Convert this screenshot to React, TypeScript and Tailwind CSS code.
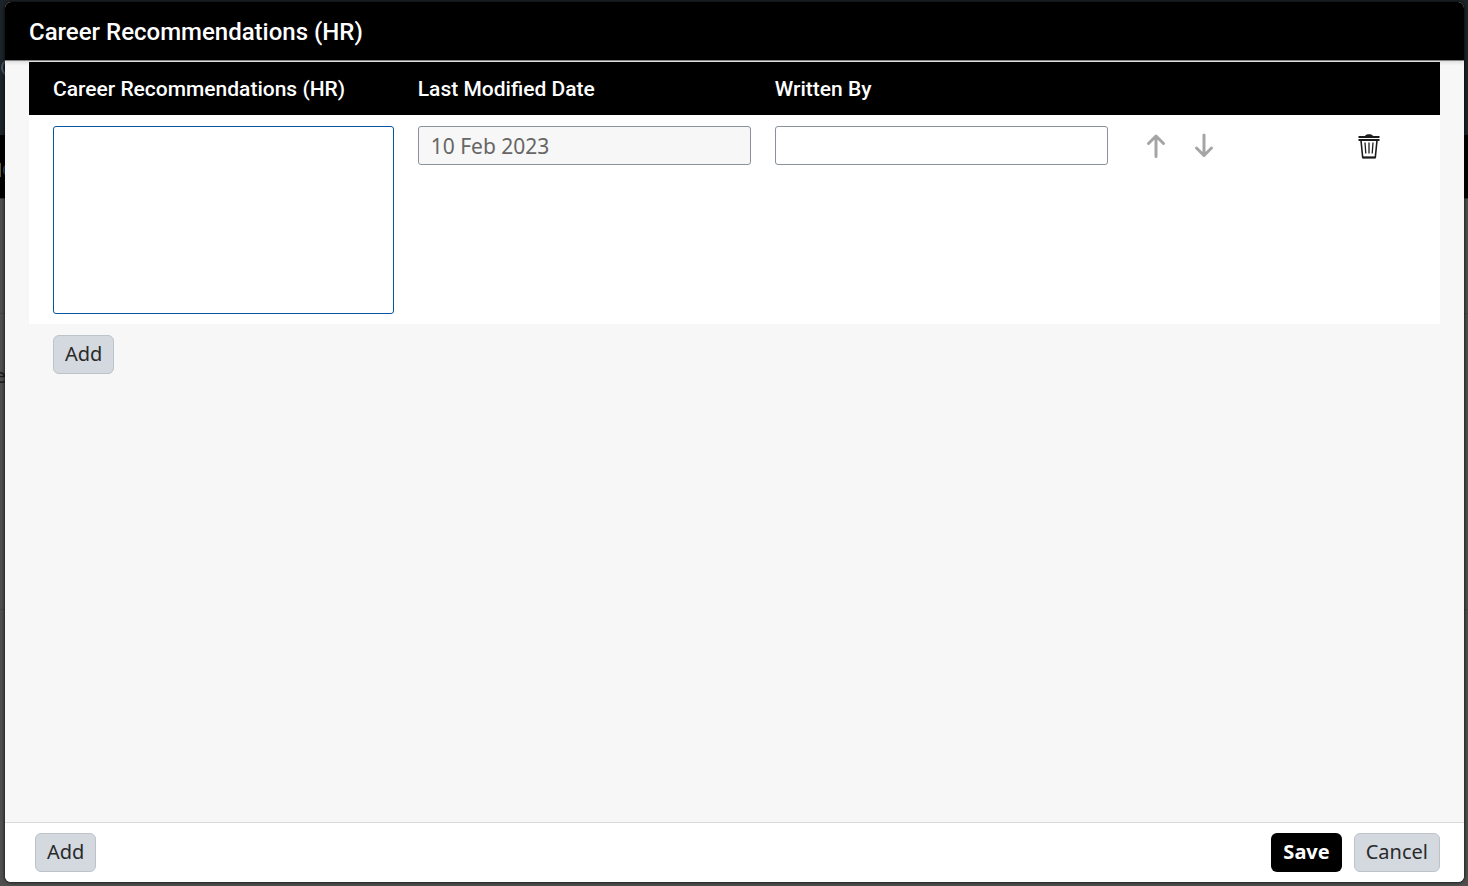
import { useState } from "react";

const secondaryButton =
  "h-[39px] rounded-md border border-[#bcc3c9] bg-[#d3d9df] px-[11px] pb-[2px] text-xl leading-6 text-[#2a2a2a]";
const iconButton = "flex h-[39px] w-12 items-center justify-center";
const field = "block w-full rounded-[3px] border px-3 text-[21px] leading-6";

function ArrowUp() {
  return (
    <svg width="20" height="26" viewBox="0 0 20 26" fill="none" stroke="#a5a5a5" strokeWidth="3" strokeLinecap="round" strokeLinejoin="round" aria-hidden="true">
      <path d="M10 23.500V3M2.500 10.500 10 3l7.500 7.500" />
    </svg>
  );
}

function ArrowDown() {
  return (
    <svg width="20" height="26" viewBox="0 0 20 26" fill="none" stroke="#a5a5a5" strokeWidth="3" strokeLinecap="round" strokeLinejoin="round" aria-hidden="true">
      <path d="M10 2v20.500M2.500 15 10 22.500l7.500-7.500" />
    </svg>
  );
}

function Trash() {
  return (
    <svg width="22" height="26" viewBox="0 0 22 26" fill="none" stroke="#1c1c1c" aria-hidden="true">
      <path d="M7 3C7.500.800 14.500.800 15 3Z" fill="#1c1c1c" stroke="none" />
      <path d="M.5 4h21M.5 7h21" strokeWidth="2" />
      <path d="M3 7.500l1.700 17h12.600l1.700-17" strokeWidth="1.600" strokeLinejoin="round" />
      <path d="M4.500 24.500h13" strokeWidth="1.800" />
      <path d="M7 9.500l.8 11M11 9.500v11M15 9.500l-.8 11" strokeWidth="1.300" />
    </svg>
  );
}

function Backdrop() {
  return (
    <div className="absolute inset-0 overflow-hidden bg-[#4f4f4f]" aria-hidden="true">
      <div className="h-[135px] bg-[#1d2429]" />
      <div className="h-16 border-b border-[#333] bg-black" />
      <div className="h-[115px] border-b border-[#454545]" />
      <div className="h-[296px] border-b border-[#454545] pt-[50px]">
        <div className="flex w-[6px] justify-end text-xl leading-6 text-[#1c1c1c]">e</div>
      </div>
      <svg className="absolute top-0 left-0" width="6" height="200" viewBox="0 0 6 200" fill="none">
        <path d="M6 60Q-2 67.500 6 75" stroke="#4b5965" strokeWidth="2" />
        <path d="M.5 163v14" stroke="#6b5836" />
        <path d="M6 165Q1.500 170 6 175" stroke="#294e6b" strokeWidth="2" />
      </svg>
    </div>
  );
}

export default function App() {
  const [text, setText] = useState("");
  const [author, setAuthor] = useState("");

  return (
    <div className="relative flex min-h-screen flex-col pt-[2px] pr-1 pb-1 pl-[5px] font-['Noto_Sans',sans-serif]">
      <Backdrop />
      <div
        role="dialog"
        aria-labelledby="dialog-title"
        className="relative flex grow flex-col overflow-hidden rounded-md bg-[#f7f7f7] shadow-[0_0_3px_1px_rgba(0,0,0,0.6)]"
      >
        <header className="relative flex h-[59px] items-center border-b border-[#858585] bg-black px-6 pt-[2px] shadow-[0_1px_4px_rgba(0,0,0,0.15)]">
          <h1 id="dialog-title" className="font-['Roboto',sans-serif] text-2xl font-medium text-white">
            Career Recommendations (HR)
          </h1>
        </header>

        <main className="grow px-6 pt-px">
          <table className="w-full table-fixed border-collapse bg-white text-left">
            <thead className="bg-black font-['Roboto',sans-serif] text-[21px] leading-7 text-white">
              <tr className="h-[53px]">
                <th scope="col" className="w-[26.7%] pr-3 pl-6 font-medium">Career Recommendations (HR)</th>
                <th scope="col" className="w-[25.3%] px-3 font-medium">Last Modified Date</th>
                <th scope="col" className="w-[25.3%] px-3 font-medium">Written By</th>
                <td />
              </tr>
            </thead>
            <tbody>
              <tr className="align-top">
                <td className="pt-[11px] pr-3 pb-[10px] pl-6">
                  <textarea
                    aria-label="Career Recommendations (HR)"
                    value={text}
                    onChange={(e) => setText(e.target.value)}
                    className={`${field} h-[188px] resize-none border-[#0854a0] bg-white py-2 outline-none`}
                  />
                </td>
                <td className="px-3 pt-[11px]">
                  <input
                    aria-label="Last Modified Date"
                    readOnly
                    value="10 Feb 2023"
                    className={`${field} h-[39px] border-[#89919a] bg-[#f7f7f7] text-[#666]`}
                  />
                </td>
                <td className="px-3 pt-[11px]">
                  <input
                    aria-label="Written By"
                    value={author}
                    onChange={(e) => setAuthor(e.target.value)}
                    className={`${field} h-[39px] border-[#89919a] bg-white text-[#2a2a2a]`}
                  />
                </td>
                <td className="pt-[11px] pr-[47px] pl-3">
                  <div className="flex">
                    <button type="button" disabled aria-label="Move up" className={iconButton}>
                      <ArrowUp />
                    </button>
                    <button type="button" disabled aria-label="Move down" className={iconButton}>
                      <ArrowDown />
                    </button>
                    <button type="button" aria-label="Delete" className={`${iconButton} ml-auto`}>
                      <Trash />
                    </button>
                  </div>
                </td>
              </tr>
            </tbody>
          </table>
          <div className="px-6 pt-[11px]">
            <button type="button" className={secondaryButton}>Add</button>
          </div>
        </main>

        <footer className="flex h-[60px] items-center gap-3 border-t border-[#d9d9d9] bg-white pr-6 pl-[30px]">
          <button type="button" className={secondaryButton}>Add</button>
          <button type="button" className="ml-auto h-[39px] rounded-md bg-black px-3 pb-[2px] text-xl leading-6 font-bold text-white">
            Save
          </button>
          <button type="button" className={secondaryButton}>Cancel</button>
        </footer>
      </div>
    </div>
  );
}
